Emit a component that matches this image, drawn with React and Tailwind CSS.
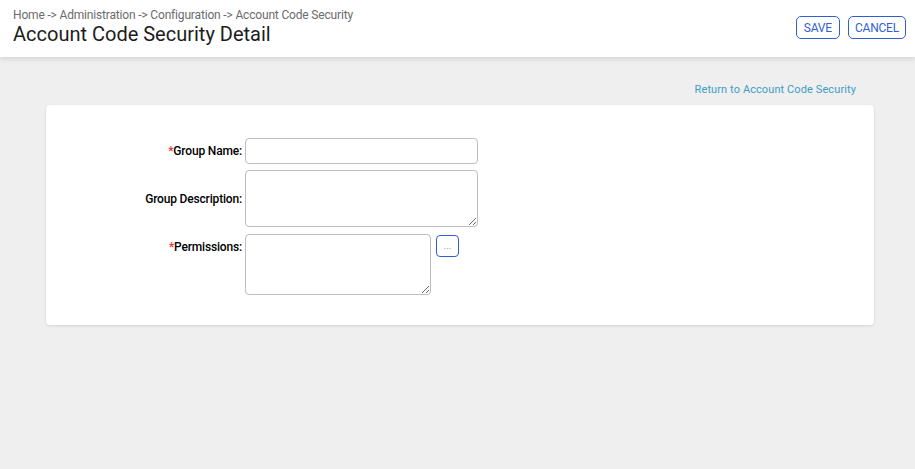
export default function App() {
  const font = { fontFamily: "Roboto, 'Liberation Sans', sans-serif" };
  return (
    <div className="min-h-screen bg-[#efefef]" style={font}>
      <header className="h-[57px] bg-white shadow-[0_2px_5px_rgba(0,0,0,0.12)] flex items-start justify-between pl-[13px] pr-[9px]">
        <div className="pt-[8px]">
          <div className="text-[12px] leading-[15px] text-[#6b6b6b] tracking-[-0.17px]">
            Home -&gt; Administration -&gt; Configuration -&gt; Account Code Security
          </div>
          <h1 className="text-[20px] leading-[23px] text-[#1c1c1c] font-normal">
            Account Code Security Detail
          </h1>
        </div>
        <div className="flex gap-[8px] pt-[16px]">
          <button className="h-[23px] px-[7px] border border-[#2f5fd6] rounded-[5px] text-[12px] tracking-[-0.2px] text-[#2f5fd6] bg-white">
            SAVE
          </button>
          <button className="h-[23px] px-[6px] border border-[#2f5fd6] rounded-[5px] text-[12px] tracking-[-0.2px] text-[#2f5fd6] bg-white">
            CANCEL
          </button>
        </div>
      </header>
      <div className="pl-[46px] pr-[41px]">
        <div className="flex justify-end pt-[26px] pr-[18px] h-[48px]">
          <a className="text-[11px] leading-[14px] text-[#3e9dc6] cursor-pointer tracking-[0.1px]">
            Return to Account Code Security
          </a>
        </div>
        <div className="bg-white rounded-[4px] shadow-[0_1px_3px_rgba(0,0,0,0.12)] pt-[33px] pb-[30px]">
          <div className="grid grid-cols-[196px_auto] gap-x-[3px] gap-y-[6px] items-center">
            <label className="text-right text-[12px] font-medium text-black tracking-[-0.17px]">
              <span className="text-[#e33]">*</span>Group Name:
            </label>
            <div>
              <input className="block w-[233px] h-[26px] border border-[#bdbdbd] rounded-[4px] bg-white px-[4px] text-[12px] outline-none" />
            </div>
            <label className="text-right text-[12px] font-medium text-black tracking-[-0.17px]">
              Group Description:
            </label>
            <div>
              <textarea className="block w-[233px] h-[57px] border border-[#bdbdbd] rounded-[4px] bg-white px-[4px] text-[12px] outline-none" />
            </div>
            <label className="self-start pt-[4px] mt-[1px] text-right text-[12px] font-medium text-black tracking-[-0.17px]">
              <span className="text-[#e33]">*</span>Permissions:
            </label>
            <div className="flex items-start gap-[5px] mt-[1px]">
              <textarea className="block w-[186px] h-[61px] border border-[#bdbdbd] rounded-[4px] bg-white px-[4px] text-[12px] outline-none" />
              <button className="mt-[1px] w-[23px] h-[22px] border border-[#2f5fd6] rounded-[4px] bg-white text-[10px] leading-[10px] text-[#8a9ff0] flex items-center justify-center">
                ...
              </button>
            </div>
          </div>
        </div>
      </div>
    </div>
  );
}
